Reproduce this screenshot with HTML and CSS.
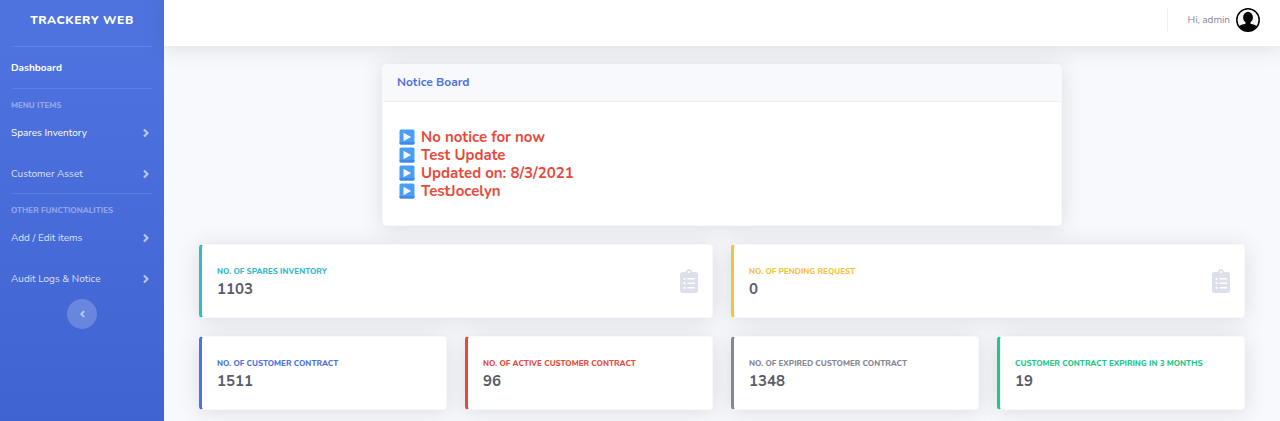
FILE: index.html
```html
<!DOCTYPE html>
<html lang="en">
<head>
<meta charset="utf-8">
<meta name="viewport" content="width=device-width, initial-scale=1">
<title>Trackery Web</title>
<link rel="stylesheet" href="styles.css">
</head>
<body>
<svg class="sprite" aria-hidden="true">
  <symbol id="chevron" viewBox="0 0 6 10"><path d="M1 1.500 4.500 5 1 8.500" fill="none" stroke="currentColor" stroke-width="2.200"/></symbol>
  <symbol id="play" viewBox="0 0 16 16">
    <rect x="0.500" y="0.500" width="15" height="15" rx="1.500" fill="#4a9ff2"/>
    <path d="M.5 13h15v1a1.500 1.500 0 0 1-1.500 1.500H2A1.500 1.500 0 0 1 .5 14z" fill="#3f8ae6"/>
    <path d="M4.500 3.800v8.400L12.200 8z" fill="#f6f2ff"/>
  </symbol>
  <symbol id="clipboard" viewBox="0 0 384 512"><path fill="currentColor" d="M336 64h-80c0-35.300-28.700-64-64-64s-64 28.700-64 64H48C21.500 64 0 85.500 0 112v352c0 26.500 21.500 48 48 48h288c26.500 0 48-21.500 48-48V112c0-26.500-21.500-48-48-48zM96 424c-13.300 0-24-10.700-24-24s10.700-24 24-24 24 10.700 24 24-10.700 24-24 24zm0-96c-13.300 0-24-10.700-24-24s10.700-24 24-24 24 10.700 24 24-10.700 24-24 24zm0-96c-13.300 0-24-10.700-24-24s10.700-24 24-24 24 10.700 24 24-10.700 24-24 24zm96-192c13.300 0 24 10.700 24 24s-10.700 24-24 24-24-10.700-24-24 10.700-24 24-24zm128 368c0 4.400-3.600 8-8 8H168c-4.400 0-8-3.600-8-8v-16c0-4.400 3.600-8 8-8h144c4.400 0 8 3.600 8 8v16zm0-96c0 4.400-3.600 8-8 8H168c-4.400 0-8-3.600-8-8v-16c0-4.400 3.600-8 8-8h144c4.400 0 8 3.600 8 8v16zm0-96c0 4.400-3.600 8-8 8H168c-4.400 0-8-3.600-8-8v-16c0-4.400 3.600-8 8-8h144c4.400 0 8 3.600 8 8v16z"/></symbol>
</svg>
<div class="app">
  <nav class="sidebar">
    <a class="brand" href="#">TRACKERY WEB</a>
    <hr class="divider">
    <a class="nav-link current" href="#">Dashboard</a>
    <hr class="divider">
    <div class="nav-heading">MENU ITEMS</div>
    <div class="nav-group">
      <a class="nav-link hovered" href="#">Spares Inventory<svg class="chevron"><use href="#chevron"/></svg></a>
      <a class="nav-link" href="#">Customer Asset<svg class="chevron"><use href="#chevron"/></svg></a>
    </div>
    <hr class="divider">
    <div class="nav-heading">OTHER FUNCTIONALITIES</div>
    <div class="nav-group">
      <a class="nav-link" href="#">Add / Edit items<svg class="chevron"><use href="#chevron"/></svg></a>
      <a class="nav-link" href="#">Audit Logs &amp; Notice<svg class="chevron"><use href="#chevron"/></svg></a>
    </div>
    <button class="toggle" type="button" aria-label="Collapse sidebar"><svg class="chevron back"><use href="#chevron"/></svg></button>
  </nav>
  <div class="content">
    <header class="topbar">
      <a class="user" href="#">Hi, admin
        <svg class="avatar" viewBox="0 0 24 24" aria-hidden="true">
          <circle cx="12" cy="12" r="11.200" fill="#f4f4f4" stroke="#000" stroke-width="1.500"/>
          <ellipse cx="12" cy="9.400" rx="4.900" ry="5.600" fill="#000"/>
          <path d="M9.500 13.500h5v2.200c2 .6 4.700.6 6.300 2.500A10.600 10.600 0 0 1 12 23a10.600 10.600 0 0 1-8.800-4.800c1.600-1.900 4.300-1.900 6.300-2.500z" fill="#000"/>
        </svg>
      </a>
    </header>
    <main class="page">
      <section class="card notice">
        <h2 class="notice-title">Notice Board</h2>
        <ul class="notice-list">
          <li><svg class="play"><use href="#play"/></svg>No notice for now</li>
          <li><svg class="play"><use href="#play"/></svg>Test Update</li>
          <li><svg class="play"><use href="#play"/></svg>Updated on: 8/3/2021</li>
          <li><svg class="play"><use href="#play"/></svg>TestJocelyn</li>
        </ul>
      </section>
      <section class="stats">
        <article class="card stat wide info"><div><h3 class="label">NO. OF SPARES INVENTORY</h3><p class="value">1103</p></div><svg class="clipboard"><use href="#clipboard"/></svg></article>
        <article class="card stat wide warning"><div><h3 class="label">NO. OF PENDING REQUEST</h3><p class="value">0</p></div><svg class="clipboard"><use href="#clipboard"/></svg></article>
        <article class="card stat primary"><div><h3 class="label">NO. OF CUSTOMER CONTRACT</h3><p class="value">1511</p></div></article>
        <article class="card stat danger"><div><h3 class="label">NO. OF ACTIVE CUSTOMER CONTRACT</h3><p class="value">96</p></div></article>
        <article class="card stat secondary"><div><h3 class="label">NO. OF EXPIRED CUSTOMER CONTRACT</h3><p class="value">1348</p></div></article>
        <article class="card stat success"><div><h3 class="label">CUSTOMER CONTRACT EXPIRING IN 3 MONTHS</h3><p class="value">19</p></div></article>
      </section>
    </main>
  </div>
</div>
</body>
</html>
```
FILE: styles.css
```css
* { box-sizing: border-box; }
body {
  margin: 0;
  font-family: Nunito, Lato, "Open Sans", sans-serif;
  font-size: 10px;
  line-height: 16px;
  color: #858796;
  background: #f8f9fc;
}
a { color: inherit; text-decoration: none; }
h2, h3, p, ul { margin: 0; padding: 0; }
.sprite { position: absolute; width: 0; height: 0; }

.app { display: flex; min-height: 100vh; overflow: hidden; }

.sidebar {
  display: flex;
  flex-direction: column;
  flex: 0 0 164px;
  min-height: 100vh;
  color: rgba(255, 255, 255, 0.8);
  background: linear-gradient(180deg, #4e73df 10%, #3d62d0 115%);
}
.brand {
  padding: 12px 0 18px;
  text-align: center;
  font-size: 12px;
  font-weight: 800;
  letter-spacing: 0.05em;
  color: #fff;
}
.divider {
  width: calc(100% - 24px);
  margin: 0 12px;
  border: 0;
  border-top: 1px solid rgba(255, 255, 255, 0.1);
}
.nav-group { display: grid; gap: 3px; }
.nav-link {
  display: flex;
  align-items: center;
  justify-content: space-between;
  padding: 11px 15px 11px 11px;
}
.nav-link.current { padding: 13px 11px 12px; font-weight: 700; color: #fff; }
.nav-link.hovered { color: #fff; }
.nav-heading {
  padding: 9px 11px 1px;
  font-size: 8px;
  font-weight: 800;
  line-height: 15px;
  color: rgba(255, 255, 255, 0.4);
}
.chevron { width: 6px; height: 10px; color: rgba(255, 255, 255, 0.6); }
.chevron.back { width: 5px; height: 8px; transform: rotate(180deg); }
.toggle {
  display: grid;
  place-items: center;
  align-self: center;
  width: 30px;
  height: 30px;
  margin-top: 1px;
  padding: 0;
  border: 0;
  border-radius: 50%;
  background: rgba(255, 255, 255, 0.2);
}

.content { flex: 1; min-width: 0; }
.topbar {
  display: flex;
  justify-content: flex-end;
  padding: 8px 20px 14px;
  background: #fff;
  box-shadow: 0 2px 21px rgba(58, 59, 69, 0.15);
}
.user {
  display: flex;
  align-items: center;
  gap: 6px;
  padding-left: 20px;
  border-left: 1px solid #eceef5;
}
.avatar { width: 24px; height: 24px; }

.page { padding: 18px 35px 11px; }
.card {
  background: #fff;
  border: 1px solid #f8f9fc;
  border-radius: 4px;
  box-shadow: 0 2px 21px rgba(58, 59, 69, 0.15);
}
.notice { width: 65%; margin: 0 auto 18px; }
.notice-title {
  padding: 9px 14px 10px;
  font-size: 12px;
  font-weight: 700;
  line-height: 17px;
  color: #4e73df;
  background: #f8f9fc;
  border-bottom: 1px solid #eef0f6;
  border-radius: 4px 4px 0 0;
}
.notice-list {
  padding: 26px 16px 25px;
  list-style: none;
  font-size: 15px;
  font-weight: 700;
  line-height: 18px;
  color: #e74a3b;
}
.notice-list li { display: flex; align-items: center; gap: 6px; }
.play { width: 16px; height: 16px; }

.stats { display: grid; grid-template-columns: repeat(4, 1fr); gap: 18px; }
.stat {
  display: flex;
  align-items: center;
  justify-content: space-between;
  padding: 18px 14px 18px 15px;
  border-left: 3px solid var(--accent);
}
.wide { grid-column: span 2; }
.label { font-size: 8px; font-weight: 800; line-height: 17px; color: var(--accent); white-space: nowrap; }
.value { font-size: 15px; font-weight: 700; line-height: 19px; color: #5a5c69; }
.clipboard { width: 18px; height: 24px; color: #dddfeb; }
.info { --accent: #36b9cc; }
.warning { --accent: #f6c23e; }
.primary { --accent: #4e73df; }
.danger { --accent: #e74a3b; }
.secondary { --accent: #858796; }
.success { --accent: #1cc88a; }
```
